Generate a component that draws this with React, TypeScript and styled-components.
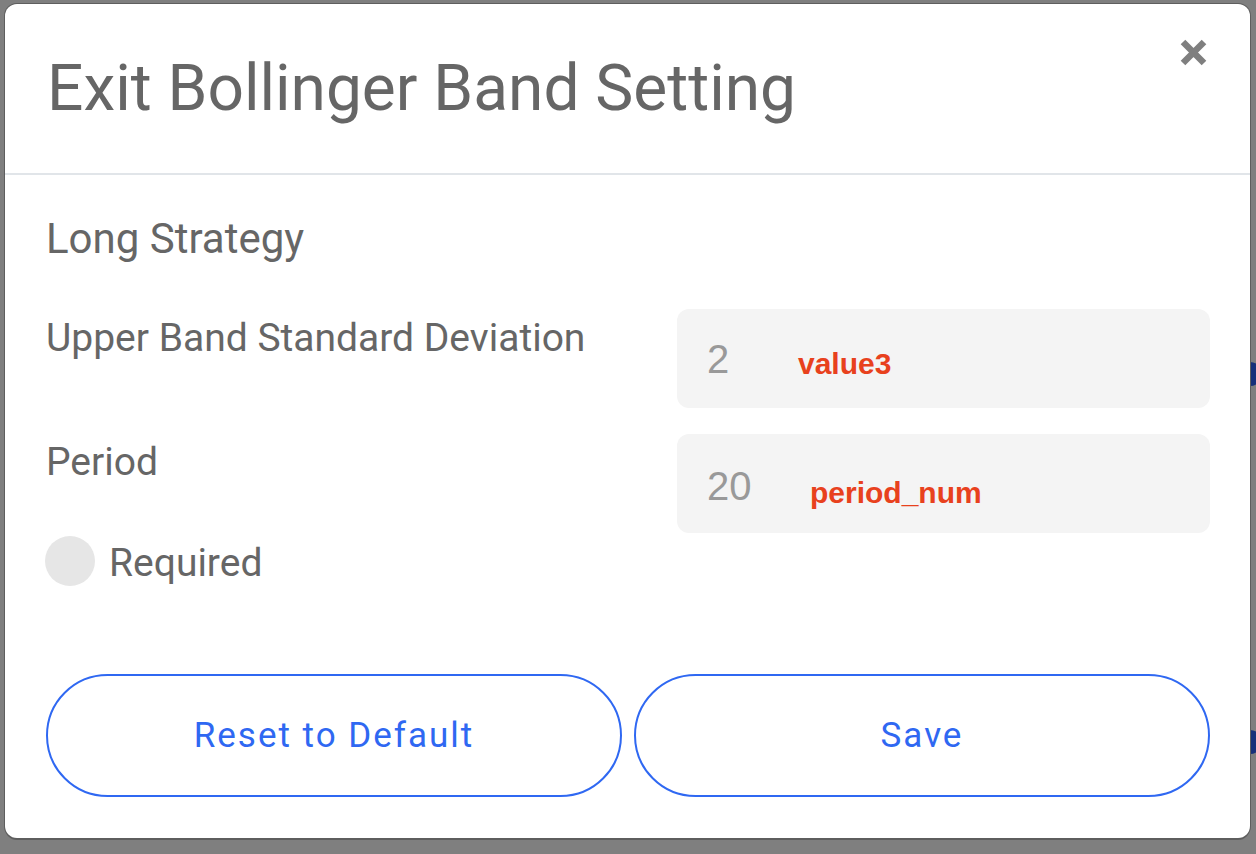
import * as React from 'react'
import styled, { createGlobalStyle } from 'styled-components'

const GlobalStyle = createGlobalStyle`
  html, body {
    margin: 0;
    padding: 0;
    background: #7f7f7f;
  }
  * {
    box-sizing: border-box;
  }
`

const Backdrop = styled.div`
  position: relative;
  width: 1256px;
  height: 854px;
  overflow: hidden;
  background: #7f7f7f;
  padding: 4px 6px 0 5px;
`

// bits of the page underneath that peek out past the dialog edges
const PageDot = styled.div<{ $top: number }>`
  position: absolute;
  right: -6px;
  top: ${({ $top }) => $top}px;
  width: 24px;
  height: 24px;
  border-radius: 50%;
  background: #17307a;
`

const Modal = styled.div`
  position: relative;
  z-index: 1;
  height: 834px;
  background: #fff;
  border-radius: 12px;
  box-shadow: 0 0 0 1px #5e5e5e, 0 2px 0 #5e5e5e;
  display: flex;
  flex-direction: column;
  font-family: Roboto, 'Noto Sans', sans-serif;
  color: #666;
`

const Header = styled.div`
  height: 171px;
  flex-shrink: 0;
  display: flex;
  align-items: center;
  justify-content: space-between;
  padding-left: 42px;
  border-bottom: 2px solid #e1e5e9;
`

const Title = styled.h1`
  margin: 0;
  font-size: 64px;
  font-weight: 400;
  line-height: 76px;
  color: #666;
`

const CloseButton = styled.button`
  align-self: flex-start;
  margin: 34px 42px 0 0;
  padding: 0;
  width: 29px;
  height: 29px;
  border: none;
  background: none;
  cursor: pointer;
  display: flex;
`

const Body = styled.div`
  flex: 1;
  display: flex;
  flex-direction: column;
  padding: 40px 40px 41px 41px;
`

const SectionTitle = styled.h2`
  margin: 0 0 46px;
  font-size: 42px;
  font-weight: 400;
  line-height: 48px;
  color: #666;
`

const Form = styled.div`
  display: grid;
  grid-template-columns: 1fr 533px;
  row-gap: 26px;
`

const LabelColumn = styled.div`
  display: flex;
  flex-direction: column;
`

const Label = styled.div<{ $offset?: number }>`
  font-size: 39px;
  line-height: 48px;
  padding-top: ${({ $offset }) => $offset ?? 0}px;
`

const RadioRow = styled.label`
  display: flex;
  align-items: center;
  gap: 14px;
  margin-top: 48px;
  margin-left: -1px;
  font-size: 39px;
  line-height: 48px;
`

const RadioDot = styled.span`
  width: 50px;
  height: 50px;
  border-radius: 50%;
  background: #e6e6e6;
  flex-shrink: 0;
`

const RadioText = styled.span`
  padding-top: 5px;
`

const Field = styled.div`
  position: relative;
  height: 99px;
  border-radius: 12px;
  background: #f4f4f4;
  padding-left: 30px;
  display: flex;
  align-items: center;
  font-family: 'Liberation Sans', Arial, sans-serif;
  font-size: 40px;
  color: #999;
`

const FieldValue = styled.span<{ $shift?: number }>`
  line-height: 1;
  margin-top: ${({ $shift }) => $shift ?? 0}px;
`

const Annotation = styled.span<{ $left: number; $top: number }>`
  position: absolute;
  left: ${({ $left }) => $left}px;
  top: ${({ $top }) => $top}px;
  font-family: 'Liberation Sans', Arial, sans-serif;
  font-weight: 700;
  font-size: 30px;
  line-height: 30px;
  color: #e8411d;
`

const Actions = styled.div`
  margin-top: auto;
  display: grid;
  grid-template-columns: 1fr 1fr;
  gap: 12px;
`

const OutlineButton = styled.button`
  height: 123px;
  border: 2px solid #2f68f2;
  border-radius: 62px;
  background: #fff;
  color: #2f68f2;
  font-family: Roboto, 'Noto Sans', sans-serif;
  font-size: 35px;
  font-weight: 400;
  letter-spacing: 2px;
  cursor: pointer;
`

function CloseIcon() {
  return (
    <svg width="29" height="29" viewBox="0 0 29 29">
      <path
        d="M4 4 L25 25 M25 4 L4 25"
        stroke="#7f7f7f"
        strokeWidth="6.5"
        strokeLinecap="butt"
      />
    </svg>
  )
}

export default function App() {
  return (
    <>
      <GlobalStyle />
      <Backdrop>
        <PageDot $top={362} />
        <PageDot $top={730} />
        <Modal>
          <Header>
            <Title>Exit Bollinger Band Setting</Title>
            <CloseButton aria-label="Close">
              <CloseIcon />
            </CloseButton>
          </Header>
          <Body>
            <SectionTitle>Long Strategy</SectionTitle>
            <Form>
              <Label $offset={5}>Upper Band Standard Deviation</Label>
              <Field>
                <FieldValue>2</FieldValue>
                <Annotation $left={121} $top={40}>
                  value3
                </Annotation>
              </Field>
              <LabelColumn>
                <Label $offset={4}>Period</Label>
                <RadioRow>
                  <RadioDot />
                  <RadioText>Required</RadioText>
                </RadioRow>
              </LabelColumn>
              <Field style={{ alignSelf: 'start' }}>
                <FieldValue $shift={4}>20</FieldValue>
                <Annotation $left={133} $top={44}>
                  period_num
                </Annotation>
              </Field>
            </Form>
            <Actions>
              <OutlineButton>Reset to Default</OutlineButton>
              <OutlineButton>Save</OutlineButton>
            </Actions>
          </Body>
        </Modal>
      </Backdrop>
    </>
  )
}
